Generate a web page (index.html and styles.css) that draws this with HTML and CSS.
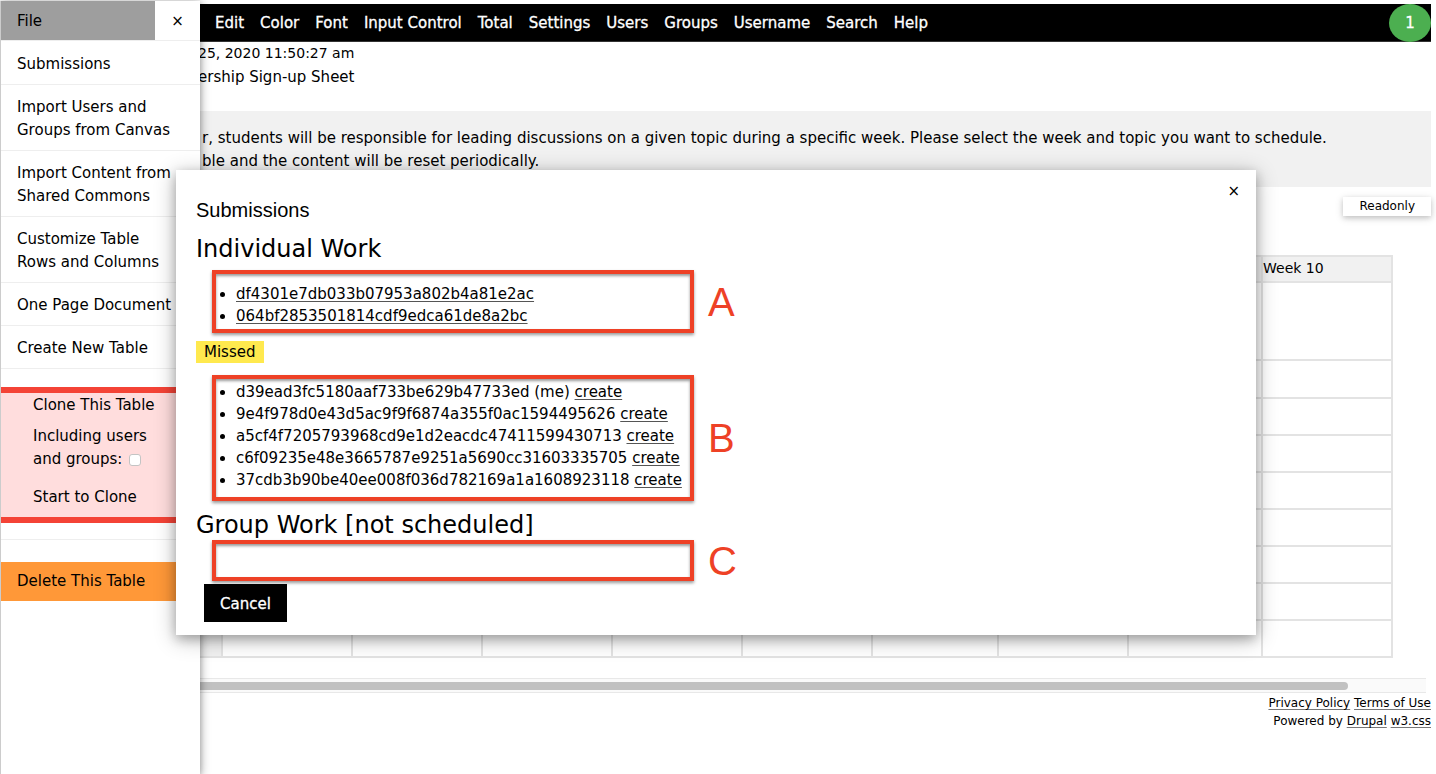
FILE: index.html
```html
<!DOCTYPE html>
<html lang="en">
<head>
<meta charset="utf-8">
<title>Sign-up Sheet</title>
<link rel="stylesheet" href="styles.css">
</head>
<body>
<div class="page">
  <nav class="topbar">
    <a href="#">Edit</a><a href="#">Color</a><a href="#">Font</a><a href="#">Input Control</a><a href="#">Total</a><a href="#">Settings</a><a href="#">Users</a><a href="#">Groups</a><a href="#">Username</a><a href="#">Search</a><a href="#">Help</a>
    <button class="count" type="button">1</button>
  </nav>
  <header class="heading">
    <p class="date">25, 2020 11:50:27 am</p>
    <p>ership Sign-up Sheet</p>
  </header>
  <section class="notice">
    <p>r, students will be responsible for leading discussions on a given topic during a specific week. Please select the week and topic you want to schedule.</p>
    <p>ble and the content will be reset periodically.</p>
  </section>
  <div class="tools"><button class="readonly" type="button">Readonly</button></div>
  <table class="grid">
    <colgroup><col><col class="c"><col class="c"><col class="c"><col class="c"><col class="c"><col class="c-s"><col class="c"><col class="c-l"><col class="c"></colgroup>
    <thead><tr><th></th><th></th><th></th><th></th><th></th><th></th><th></th><th></th><th></th><th>Week 10</th></tr></thead>
    <tbody>
      <tr class="tall"><th></th><td></td><td></td><td></td><td></td><td></td><td></td><td></td><td></td><td></td></tr>
      <tr class="mid"><th></th><td></td><td></td><td></td><td></td><td></td><td></td><td></td><td></td><td></td></tr>
      <tr><th></th><td></td><td></td><td></td><td></td><td></td><td></td><td></td><td></td><td></td></tr>
      <tr><th></th><td></td><td></td><td></td><td></td><td></td><td></td><td></td><td></td><td></td></tr>
      <tr><th></th><td></td><td></td><td></td><td></td><td></td><td></td><td></td><td></td><td></td></tr>
      <tr><th></th><td></td><td></td><td></td><td></td><td></td><td></td><td></td><td></td><td></td></tr>
      <tr><th></th><td></td><td></td><td></td><td></td><td></td><td></td><td></td><td></td><td></td></tr>
      <tr><th></th><td></td><td></td><td></td><td></td><td></td><td></td><td></td><td></td><td></td></tr>
      <tr><th></th><td></td><td></td><td></td><td></td><td></td><td></td><td></td><td></td><td></td></tr>
    </tbody>
  </table>
  <div class="track"><div class="thumb"></div></div>
  <footer class="footer">
    <p><a href="#">Privacy Policy</a> <a href="#">Terms of Use</a></p>
    <p>Powered by <a href="#">Drupal</a> <a href="#">w3.css</a></p>
  </footer>
</div>

<aside class="sidebar">
  <div class="side-head"><span class="side-title">File</span><button class="close" type="button" aria-label="Close menu">×</button></div>
  <a class="item" href="#">Submissions</a>
  <a class="item" href="#">Import Users and Groups from Canvas</a>
  <a class="item" href="#">Import Content from Shared Commons</a>
  <a class="item" href="#">Customize Table<br>Rows and Columns</a>
  <a class="item" href="#">One Page Document</a>
  <a class="item" href="#">Create New Table</a>
  <div class="clone">
    <p>Clone This Table</p>
    <label class="include" for="include">Including users<br>and groups: <input class="check" id="include" type="checkbox"></label>
    <a href="#">Start to Clone</a>
  </div>
  <div class="rule"></div>
  <a class="delete" href="#">Delete This Table</a>
</aside>

<section class="modal" role="dialog" aria-labelledby="modal-title">
  <button class="modal-close" type="button" aria-label="Close dialog">×</button>
  <h1 class="modal-title" id="modal-title">Submissions</h1>
  <h2 class="work">Individual Work</h2>
  <div class="mark">
    <ul class="box box-a">
      <li><a href="#">df4301e7db033b07953a802b4a81e2ac</a></li>
      <li><a href="#">064bf2853501814cdf9edca61de8a2bc</a></li>
    </ul>
    <span class="letter">A</span>
  </div>
  <span class="missed">Missed</span>
  <div class="mark">
    <ul class="box box-b">
      <li>d39ead3fc5180aaf733be629b47733ed (me) <a href="#">create</a></li>
      <li>9e4f978d0e43d5ac9f9f6874a355f0ac1594495626 <a href="#">create</a></li>
      <li>a5cf4f7205793968cd9e1d2eacdc47411599430713 <a href="#">create</a></li>
      <li>c6f09235e48e3665787e9251a5690cc31603335705 <a href="#">create</a></li>
      <li>37cdb3b90be40ee008f036d782169a1a1608923118 <a href="#">create</a></li>
    </ul>
    <span class="letter">B</span>
  </div>
  <h2 class="work">Group Work [not scheduled]</h2>
  <div class="mark">
    <div class="box box-c"></div>
    <span class="letter">C</span>
  </div>
  <button class="cancel" type="button">Cancel</button>
</section>
</body>
</html>
```

FILE: styles.css
```css
* { box-sizing: border-box; }
body {
  margin: 0;
  min-height: 100vh;
  position: relative;
  background: #fff;
  color: #000;
  font: 15px/23px Verdana, "DejaVu Sans", sans-serif;
}
p, h1, h2, ul { margin: 0; padding: 0; font-weight: 400; }
a { color: inherit; text-decoration: none; }
button { margin: 0; padding: 0; border: 0; font: inherit; color: inherit; background: none; }

/* Page under the menu */
.page { padding: 4px 5px 0 0; }
.topbar {
  display: flex;
  align-items: center;
  gap: 16px;
  height: 38px;
  padding-top: 2px;
  padding-left: 215px;
  background: #000;
  color: #fff;
  border-bottom: 1px solid #333;
  white-space: nowrap;
  -webkit-text-stroke: 0.3px #fff;
}
.count {
  width: 42px;
  height: 38px;
  margin-top: -1px;
  margin-left: auto;
  border-radius: 50%;
  background: #4caf50;
}
.heading { padding-left: 198px; }
.date { font-size: 14px; }
.heading p + p { margin-top: 1px; }
.notice {
  margin-top: 22px;
  padding: 16px 0 14px 202px;
  background: #f1f1f1;
}
.tools { display: flex; justify-content: flex-end; margin-top: 10px; }
.readonly {
  padding: 0 16px;
  font-size: 12px;
  line-height: 19px;
  background: #fff;
  box-shadow: 0 2px 5px rgba(0,0,0,.16), 0 2px 10px rgba(0,0,0,.12);
}
.grid {
  width: calc(100% - 38px);
  margin-top: 39px;
  border-collapse: collapse;
  table-layout: fixed;
}
.c { width: 130px; }
.c-s { width: 126px; }
.c-l { width: 134px; }
.grid th, .grid td { height: 37px; padding: 0; border: 2px solid #e3e3e3; }
.grid th { background: #f1f1f1; font-weight: 400; font-size: 14px; text-align: left; vertical-align: top; }
.grid thead th { height: 26px; }
.grid .tall td { height: 78px; }
.grid .mid td { height: 38px; }
.track {
  height: 15px;
  margin: 20px 5px 0 0;
  padding: 3px 0;
  background: #fafafa;
  border: 1px solid #e8e8e8;
  border-width: 1px 0;
}
.thumb { width: 1348px; max-width: 95%; height: 8px; border-radius: 4px; background: #c1c1c1; }
.footer { margin-top: 1px; font-size: 12px; line-height: 18px; text-align: right; }
.footer a { text-decoration: underline 1px #777; text-underline-offset: 2px; }

/* File menu */
.sidebar {
  position: absolute;
  top: 1px;
  bottom: 0;
  left: 0;
  width: 200px;
  background: #fff;
  border-left: 1px solid #ccc;
  box-shadow: 0 2px 5px rgba(0,0,0,.16), 0 2px 10px rgba(0,0,0,.4);
}
.side-head { display: flex; border-bottom: 1px solid #eee; }
.side-title { flex: 1; padding: 9px 16px 7px; background: #9e9e9e; }
.close { width: 45px; padding-top: 2px; }
.item { display: block; padding: 12px 16px 8px; border-bottom: 1px solid #eee; }
.item + .item { padding-top: 11px; }
.clone {
  display: grid;
  margin-top: 18px;
  padding: 1px 16px 8px 32px;
  background: #fdd;
  border: solid #f44336;
  border-width: 6px 0;
}
.include { margin: 8px 0 15px; }
.check {
  appearance: none;
  width: 12px;
  height: 12px;
  margin: 0 0 0 2px;
  vertical-align: -2px;
  border: 1px solid #c4c4c4;
  border-radius: 3px;
  background: #fff;
}
.rule { height: 17px; border-bottom: 1px solid #eee; }
.delete { display: block; margin-top: 22px; padding: 8px 16px; background: #ff9838; }

/* Submissions dialog */
.modal {
  position: absolute;
  top: 170px;
  left: 176px;
  right: 180px;
  padding: 25px 20px 13px;
  background: #fff;
  box-shadow: 0 4px 10px rgba(0,0,0,.2), 0 4px 20px rgba(0,0,0,.3);
}
.modal-close { position: absolute; top: 10px; right: 16px; }
.modal-title { font: 20px/30px "Liberation Sans", Arial, sans-serif; }
.work { margin-top: 9px; font-size: 24px; line-height: 30px; }
.mark { display: flex; align-items: center; gap: 14px; margin-left: 16px; }
.box {
  width: 482px;
  padding-left: 20px;
  border: 4px solid #ee4126;
  box-shadow: 0 2px 3px rgba(0,0,0,.4), inset 0 2px 3px rgba(0,0,0,.4);
  line-height: 22px;
}
.box a { text-decoration: underline 1px #555; text-underline-offset: 2px; }
.mark:has(.box-a) { margin-top: 6px; }
.mark:has(.box-b) { margin-top: 12px; }
.box-a { padding-top: 9px; padding-bottom: 2px; }
.box-b { padding-top: 2px; padding-bottom: 6px; }
.box-c { height: 41px; }
.letter { font: 40px/40px "Liberation Sans", Arial, sans-serif; color: #ee4126; }
.missed {
  display: block;
  width: fit-content;
  margin-top: 8px;
  padding: 0 8px;
  line-height: 22px;
  background: #ffe94e;
}
.cancel {
  display: block;
  height: 38px;
  margin: 3px 0 0 8px;
  padding: 2px 16px 0;
  background: #000;
  color: #fff;
  -webkit-text-stroke: 0.3px #fff;
}
```
